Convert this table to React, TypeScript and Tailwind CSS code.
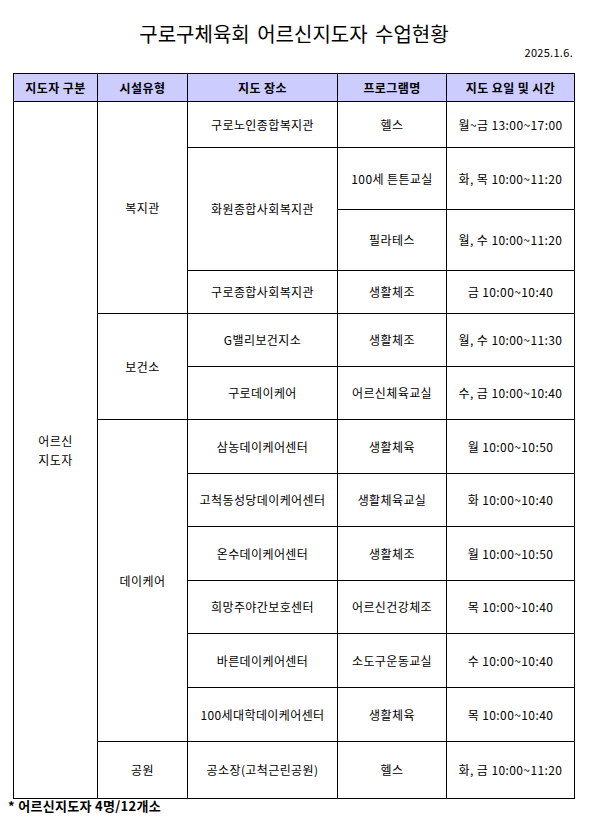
import React from "react";

const font = { fontFamily: '"Noto Sans CJK KR", "Noto Sans", sans-serif' };

function Cell({ className = "", children }: { className?: string; children?: React.ReactNode }) {
  return (
    <div className={"bg-white flex items-center justify-center text-center text-[12px] text-black whitespace-nowrap " + className}>
      {children}
    </div>
  );
}

function Head({ className = "", children }: { className?: string; children?: React.ReactNode }) {
  return (
    <div className={"bg-[#ccccff] flex items-center justify-center text-[12px] font-bold text-black whitespace-nowrap row-start-1 " + className}>
      {children}
    </div>
  );
}

export default function App() {
  return (
    <div className="w-[599px] h-[822px] bg-white" style={font}>
      <div className="pt-[22px] h-[46px] w-[562px] ml-[13px] text-center text-[20px] leading-[24px] tracking-[0px] [word-spacing:3px] text-black">
        구로구체육회 어르신지도자 수업현황
      </div>
      <div className="h-[12px] w-[562px] ml-[13px] text-right text-[11px] leading-[12px] text-black pr-[2px] tracking-[0.3px]">
        2025.1.6.
      </div>
      <div className="mt-[15px] ml-[13px] w-[562px] grid bg-black p-px gap-px grid-cols-[83px_89px_149px_108px_127px] grid-rows-[27px_45px_61px_60px_42px_52px_52px_53px_52px_53px_52px_53px_53px_56px] tracking-[0.4px]">
        <Head className="col-start-1">지도자 구분</Head>
        <Head className="col-start-2">시설유형</Head>
        <Head className="col-start-3">지도 장소</Head>
        <Head className="col-start-4">프로그램명</Head>
        <Head className="col-start-5">지도 요일 및 시간</Head>

        <Cell className="col-start-1 row-start-2 row-end-15 leading-[19px]">
          어르신
          <br />
          지도자
        </Cell>

        <Cell className="col-start-2 row-start-2 row-end-6">복지관</Cell>
        <Cell className="col-start-2 row-start-6 row-end-8">보건소</Cell>
        <Cell className="col-start-2 row-start-8 row-end-14">데이케어</Cell>
        <Cell className="col-start-2 row-start-14 row-end-15">공원</Cell>

        <Cell className="col-start-3 row-start-2">구로노인종합복지관</Cell>
        <Cell className="col-start-4 row-start-2">헬스</Cell>
        <Cell className="col-start-5 row-start-2">월~금 13:00~17:00</Cell>

        <Cell className="col-start-3 row-start-3 row-end-5">화원종합사회복지관</Cell>
        <Cell className="col-start-4 row-start-3">100세 튼튼교실</Cell>
        <Cell className="col-start-5 row-start-3">화, 목 10:00~11:20</Cell>
        <Cell className="col-start-4 row-start-4">필라테스</Cell>
        <Cell className="col-start-5 row-start-4">월, 수 10:00~11:20</Cell>

        <Cell className="col-start-3 row-start-5">구로종합사회복지관</Cell>
        <Cell className="col-start-4 row-start-5">생활체조</Cell>
        <Cell className="col-start-5 row-start-5">금 10:00~10:40</Cell>

        <Cell className="col-start-3 row-start-6">G밸리보건지소</Cell>
        <Cell className="col-start-4 row-start-6">생활체조</Cell>
        <Cell className="col-start-5 row-start-6">월, 수 10:00~11:30</Cell>

        <Cell className="col-start-3 row-start-7">구로데이케어</Cell>
        <Cell className="col-start-4 row-start-7">어르신체육교실</Cell>
        <Cell className="col-start-5 row-start-7">수, 금 10:00~10:40</Cell>

        <Cell className="col-start-3 row-start-8">삼농데이케어센터</Cell>
        <Cell className="col-start-4 row-start-8">생활체육</Cell>
        <Cell className="col-start-5 row-start-8">월 10:00~10:50</Cell>

        <Cell className="col-start-3 row-start-9">고척동성당데이케어센터</Cell>
        <Cell className="col-start-4 row-start-9">생활체육교실</Cell>
        <Cell className="col-start-5 row-start-9">화 10:00~10:40</Cell>

        <Cell className="col-start-3 row-start-10">온수데이케어센터</Cell>
        <Cell className="col-start-4 row-start-10">생활체조</Cell>
        <Cell className="col-start-5 row-start-10">월 10:00~10:50</Cell>

        <Cell className="col-start-3 row-start-11">희망주야간보호센터</Cell>
        <Cell className="col-start-4 row-start-11">어르신건강체조</Cell>
        <Cell className="col-start-5 row-start-11">목 10:00~10:40</Cell>

        <Cell className="col-start-3 row-start-12">바른데이케어센터</Cell>
        <Cell className="col-start-4 row-start-12">소도구운동교실</Cell>
        <Cell className="col-start-5 row-start-12">수 10:00~10:40</Cell>

        <Cell className="col-start-3 row-start-13">100세대학데이케어센터</Cell>
        <Cell className="col-start-4 row-start-13">생활체육</Cell>
        <Cell className="col-start-5 row-start-13">목 10:00~10:40</Cell>

        <Cell className="col-start-3 row-start-14">공소장(고척근린공원)</Cell>
        <Cell className="col-start-4 row-start-14">헬스</Cell>
        <Cell className="col-start-5 row-start-14">화, 금 10:00~11:20</Cell>
      </div>
      <div className="ml-[8px] text-[13px] leading-[14px] font-bold text-black tracking-[0.3px]">* 어르신지도자 4명/12개소</div>
    </div>
  );
}
